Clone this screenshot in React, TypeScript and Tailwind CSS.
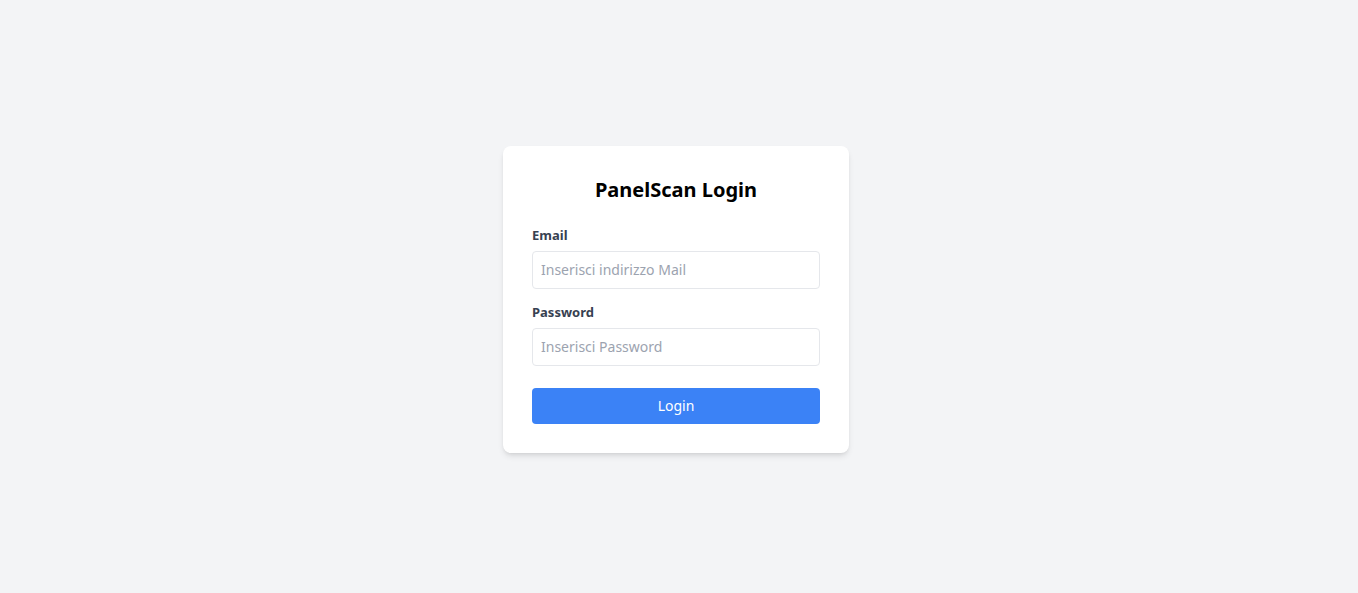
import React from "react";

export default function App() {
  return (
    <div
      className="min-h-screen w-full bg-[#f3f4f6] flex items-center justify-center pt-[5px] pr-[6px]"
      style={{ fontFamily: '"Noto Sans", "Open Sans", sans-serif' }}
    >
      <div className="bg-white rounded-lg shadow-md w-[346px] px-[29px] pt-[30px] pb-[29px]">
        <h1 className="text-[20px] leading-[28px] font-bold text-black text-center mb-[21px]">
          PanelScan Login
        </h1>
        <label className="block text-[13px] leading-[20px] font-bold text-[#374151] mb-[6px]">Email</label>
        <input
          type="email"
          placeholder="Inserisci indirizzo Mail"
          className="block w-full h-[38px] border border-[#e5e7eb] rounded px-2 text-[14px] text-[#374151] placeholder:text-[#9ca3af] outline-none mb-[13px]"
        />
        <label className="block text-[13px] leading-[20px] font-bold text-[#374151] mb-[6px]">Password</label>
        <input
          type="password"
          placeholder="Inserisci Password"
          className="block w-full h-[38px] border border-[#e5e7eb] rounded px-2 text-[14px] text-[#374151] placeholder:text-[#9ca3af] outline-none mb-[22px]"
        />
        <button className="block w-full h-[36px] bg-[#3b82f6] text-white rounded text-[14px]">
          Login
        </button>
      </div>
    </div>
  );
}
